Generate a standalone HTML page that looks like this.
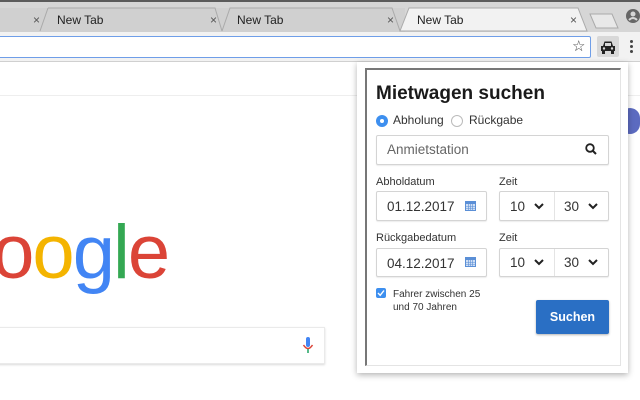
<!DOCTYPE html>
<html><head><meta charset="utf-8"><style>
*{margin:0;padding:0;box-sizing:border-box}
html,body{width:640px;height:400px;overflow:hidden}
body{position:relative;background:#fff;font-family:"Liberation Sans",sans-serif}
.a{position:absolute}
.tab{position:absolute;top:8px;height:24px;font-size:12px;color:#222;line-height:24px}
.x{position:absolute;font-size:12px;color:#555;top:8px;line-height:24px}
.lbl{position:absolute;font-size:11px;color:#333}
.fld{position:absolute;background:#fff;border:1px solid #d4d4d4;border-radius:2px;box-shadow:0 1px 1px rgba(0,0,0,.08)}
.t{position:absolute;font-size:13.5px;color:#333}
</style></head><body>
<div class="a" style="left:0;top:0;width:640px;height:400px;overflow:hidden">
<div class="a" style="left:0;top:0;width:640px;height:32px;background:#d6d6d6;border-top:2px solid #5b5b5b"></div>
<div class="a" style="left:0;top:8px;width:405px;height:24px;background:#d0d0d0"></div>
<svg class="a" style="left:0;top:0" width="640" height="32">
<path d="M40 31 L48 8 M48 8 L215 8 L222 31 M222 31 L230 8 L392 8 L400 31" fill="none" stroke="#aaa"/>
<path d="M400 31 L409 8 L578 8 L587 31 Z" fill="#f2f2f2" stroke="#aaa"/>
<path d="M590 14 L612 14 L618 28 L596 28 Z" fill="#e8e8e8" stroke="#aaa"/>
</svg>
<div class="x" style="left:33px">×</div>
<div class="tab" style="left:57px">New Tab</div>
<div class="x" style="left:210px">×</div>
<div class="tab" style="left:237px">New Tab</div>
<div class="x" style="left:387px">×</div>
<div class="tab" style="left:417px">New Tab</div>
<div class="x" style="left:570px">×</div>
<svg class="a" style="left:625px;top:9px" width="15" height="15"><circle cx="8" cy="7" r="7" fill="#666"/><circle cx="8" cy="5" r="2.5" fill="#d6d6d6"/><path d="M4 11 Q8 7 12 11" stroke="#d6d6d6" stroke-width="2" fill="none"/></svg>
<div class="a" style="left:0;top:32px;width:640px;height:30px;background:#f2f2f2;border-bottom:1px solid #d0d0d0"></div>
<div class="a" style="left:-5px;top:36px;width:596px;height:22px;background:#fff;border:1px solid #6f9ee8;border-radius:2px"></div>
<div class="a" style="left:572px;top:37px;font-size:15px;color:#444">☆</div>
<div class="a" style="left:597px;top:36px;width:22px;height:21px;background:#d8d8d8;border-radius:2px"></div>
<svg class="a" style="left:600px;top:40px" width="16" height="14"><path d="M3 6 L4.5 1.5 H11.5 L13 6 H15 V11 H1 V6Z" fill="#222"/><rect x="2" y="11" width="3" height="3" fill="#222"/><rect x="11" y="11" width="3" height="3" fill="#222"/><rect x="5" y="3" width="6" height="3" fill="#d8d8d8"/><circle cx="4" cy="8.5" r="1.2" fill="#d8d8d8"/><circle cx="12" cy="8.5" r="1.2" fill="#d8d8d8"/></svg>
<div class="a" style="left:630px;top:40px;width:3px;height:3px;background:#444;border-radius:50%"></div>
<div class="a" style="left:630px;top:45px;width:3px;height:3px;background:#444;border-radius:50%"></div>
<div class="a" style="left:630px;top:50px;width:3px;height:3px;background:#444;border-radius:50%"></div>
<div class="a" style="left:0;top:95px;width:640px;height:1px;background:#eee"></div>
<div class="a" style="left:620px;top:108px;width:20px;height:26px;background:#5c6bc0;border-radius:13px"></div>
<div class="a" style="left:-65px;top:215px;font-size:76px;letter-spacing:-2px;line-height:76px;white-space:nowrap"><span style="color:#4285f4">G</span><span style="color:#db4437">o</span><span style="color:#f4b400">o</span><span style="color:#4285f4">g</span><span style="color:#34a853">l</span><span style="color:#db4437">e</span></div>
<div class="a" style="left:-5px;top:327px;width:330px;height:37px;background:#fff;border:1px solid #eaeaea;box-shadow:0 1px 2px rgba(0,0,0,.15)"></div>
<svg class="a" style="left:302px;top:337px" width="12" height="18"><rect x="4" y="0" width="4" height="10" rx="2" fill="#4285f4"/><path d="M1.5 8 Q6 15 10.5 8" stroke="#db4437" stroke-width="1.5" fill="none"/><rect x="5.3" y="12" width="1.4" height="4" fill="#0f9d58"/></svg>
<div class="a" style="left:357px;top:62px;width:271px;height:311px;background:#fff;box-shadow:0 2px 6px rgba(0,0,0,.3)"></div>
<div class="a" style="left:365px;top:68px;width:256px;height:298px;border-left:2px solid #777;border-top:2px solid #777;border-right:1px solid #e4e4e4;border-bottom:1px solid #e4e4e4"></div>
<div class="a" style="left:376px;top:83px;font-size:19px;font-weight:bold;color:#1a1a1a">Mietwagen suchen</div>
<div class="a" style="left:376px;top:115px;width:12px;height:12px;border-radius:50%;background:#3d8fef"><div class="a" style="left:4px;top:4px;width:4px;height:4px;border-radius:50%;background:#fff"></div></div>
<div class="t" style="left:393px;top:113px;font-size:12px">Abholung</div>
<div class="a" style="left:451px;top:115px;width:12px;height:12px;border-radius:50%;border:1px solid #bbb"></div>
<div class="t" style="left:469px;top:113px;font-size:12px">Rückgabe</div>
<div class="fld" style="left:376px;top:135px;width:233px;height:30px"></div>
<div class="t" style="left:387px;top:142px;color:#666">Anmietstation</div>
<svg class="a" style="left:585px;top:143px" width="12" height="13"><circle cx="5" cy="5" r="3.8" stroke="#222" stroke-width="1.8" fill="none"/><path d="M8 8 L11 11" stroke="#222" stroke-width="2"/></svg>
<div class="lbl" style="left:376px;top:176px">Abholdatum</div>
<div class="lbl" style="left:499px;top:176px">Zeit</div>
<div class="fld" style="left:376px;top:191px;width:111px;height:30px"></div>
<div class="t" style="left:387px;top:199px">01.12.2017</div>
<div class="fld" style="left:499px;top:191px;width:110px;height:30px"><div class="a" style="left:54px;top:0;width:1px;height:28px;background:#e4e4e4"></div></div>
<div class="t" style="left:510px;top:199px">10</div>
<div class="t" style="left:564px;top:199px">30</div>
<div class="lbl" style="left:376px;top:232px">Rückgabedatum</div>
<div class="lbl" style="left:499px;top:232px">Zeit</div>
<div class="fld" style="left:376px;top:248px;width:111px;height:29px"></div>
<div class="t" style="left:387px;top:256px">04.12.2017</div>
<div class="fld" style="left:499px;top:248px;width:110px;height:29px"><div class="a" style="left:54px;top:0;width:1px;height:27px;background:#e4e4e4"></div></div>
<div class="t" style="left:510px;top:255px">10</div>
<div class="t" style="left:564px;top:255px">30</div>
<svg class="a" style="left:0;top:0" width="640" height="400"><g stroke="#222" stroke-width="2" fill="none"><path d="M535 204 L539 208 L543 204"/><path d="M589 204 L593 208 L597 204"/><path d="M535 260 L539 264 L543 260"/><path d="M589 260 L593 264 L597 260"/></g></svg>
<svg class="a" style="left:465px;top:200px" width="11" height="11"><rect x="0" y="1" width="11" height="10" fill="#5b8fd6"/><rect x="1" y="4" width="9" height="6" fill="#cfdff5"/><path d="M1 6.5H10M1 8.5H10M3.5 4V10M5.5 4V10M7.5 4V10" stroke="#5b8fd6" stroke-width=".6"/></svg>
<svg class="a" style="left:465px;top:256px" width="11" height="11"><rect x="0" y="1" width="11" height="10" fill="#5b8fd6"/><rect x="1" y="4" width="9" height="6" fill="#cfdff5"/><path d="M1 6.5H10M1 8.5H10M3.5 4V10M5.5 4V10M7.5 4V10" stroke="#5b8fd6" stroke-width=".6"/></svg>
<div class="a" style="left:376px;top:288px;width:10px;height:10px;border-radius:2px;background:#3d8fef"></div>
<svg class="a" style="left:377px;top:289px" width="8" height="8"><path d="M1 4 L3.2 6.3 L7 1.5" stroke="#fff" stroke-width="1.4" fill="none"/></svg>
<div class="a" style="left:393px;top:288px;font-size:10px;color:#333;line-height:13px">Fahrer zwischen 25<br>und 70 Jahren</div>
<div class="a" style="left:536px;top:300px;width:73px;height:34px;background:#2a6fc4;border-radius:2px;box-shadow:0 1px 2px rgba(0,0,0,.3);color:#fff;font-weight:bold;font-size:12.5px;text-align:center;line-height:34px">Suchen</div>
</div>
</body></html>
